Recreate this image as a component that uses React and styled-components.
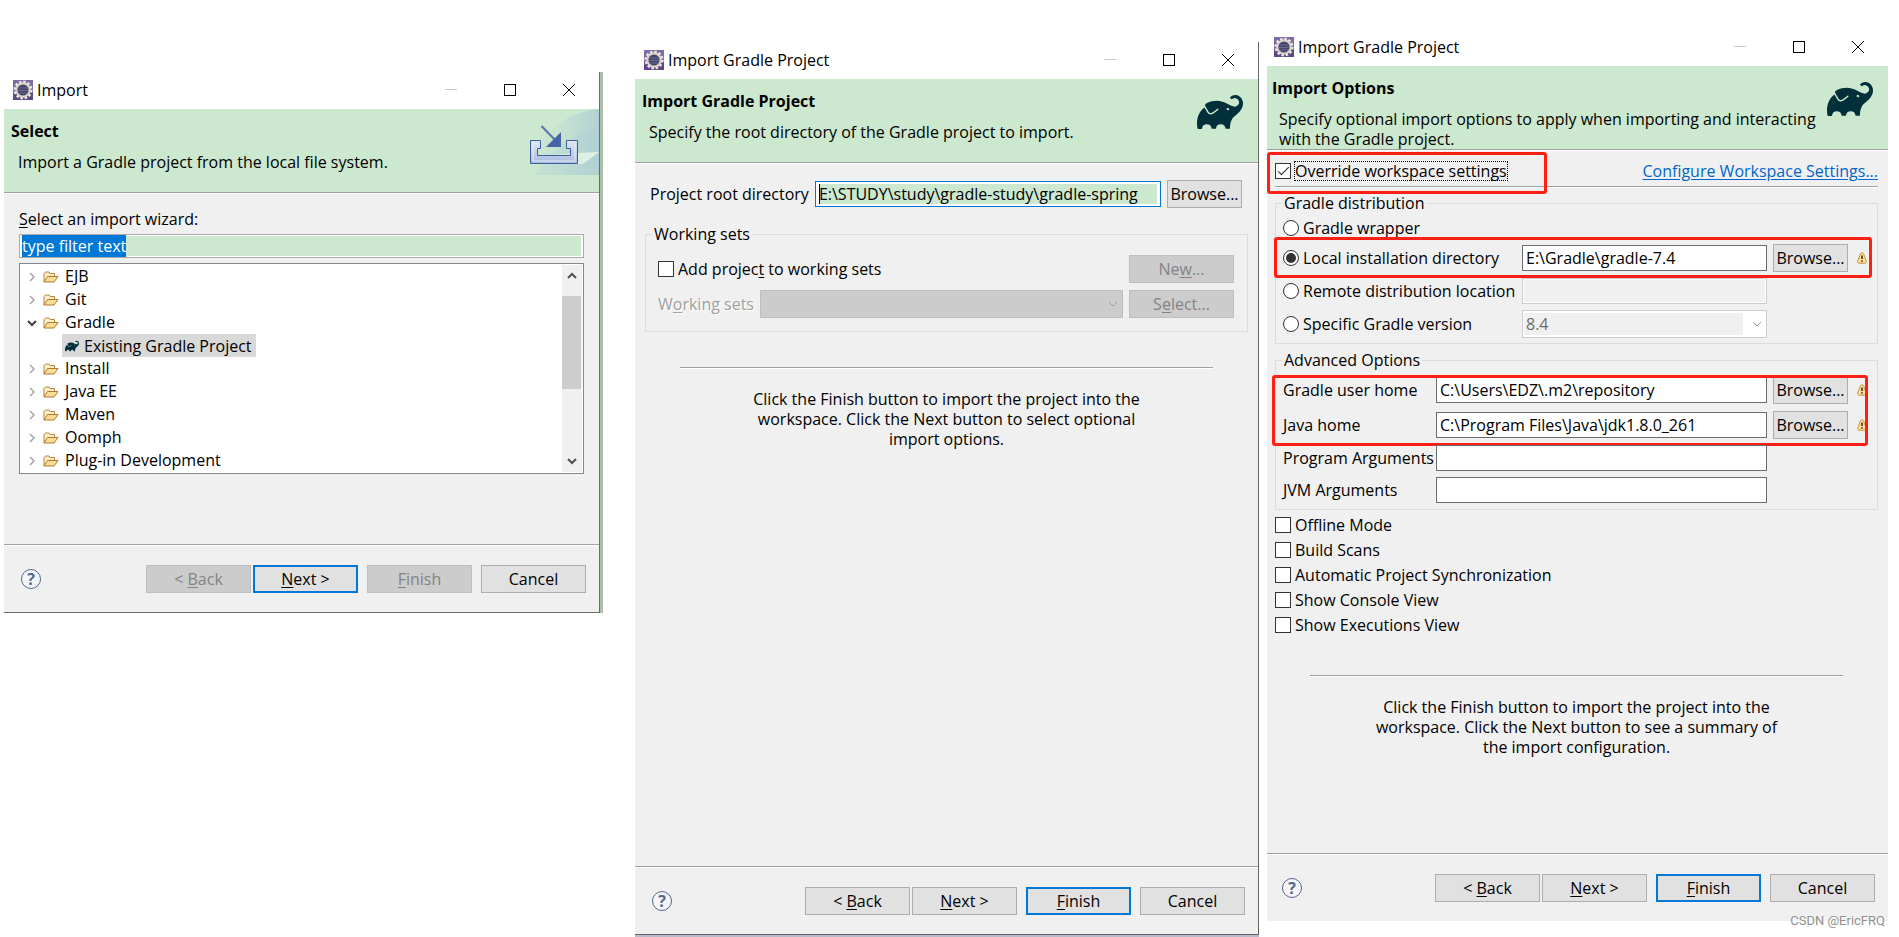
import React, { useEffect, useRef } from "react";
import styled, { createGlobalStyle, css } from "styled-components";
import { SiGradle } from "react-icons/si";

const GlobalStyle = createGlobalStyle`
  *, *::before, *::after { box-sizing: border-box; }
  body { margin: 0; background: #ffffff; }
  body, button, input, select {
    font-family: "Open Sans", "Noto Sans", "Noto Sans CJK SC", sans-serif;
    font-size: 16px;
    line-height: 20px;
    color: #000000;
  }
  u { text-underline-offset: 2px; text-decoration-thickness: 1px; }
`;

/* ---------- page and window frame ---------- */

const Desktop = styled.main`
  position: relative;
  display: grid;
  grid-template-columns: minmax(0, 596fr) 35px minmax(0, 624fr) 8px minmax(0, 621fr);
  min-height: 100vh;
  padding: 0 11px 0 4px;
`;

const Window = styled.section`
  --edge: 0px;
  display: flex;
  flex-direction: column;
  background: #f0f0f0;
`;

const SelectWindow = styled(Window)`
  grid-column: 1;
  align-self: start;
  margin-top: 72px;
  border-right: 1px solid #6a6e6b;
  border-bottom: 1px solid #6a6e6b;
  box-shadow: 3px 0 0 #a9bfac;
`;

const ProjectWindow = styled(Window)`
  grid-column: 3;
  margin: 42px 0 2px;
  border-right: 1px solid #5f6663;
  border-bottom: 1px solid #5f6663;
  box-shadow: 0 2px 0 #b7bbca;
`;

const OptionsWindow = styled(Window)`
  --edge: 2px;
  grid-column: 5;
  margin: 29px 0 16px;
`;

const TitleBar = styled.div`
  display: flex;
  align-items: center;
  height: 37px;
  padding: 0 1px 1px calc(9px - var(--edge));
  background: #ffffff;
`;

const TitleText = styled.span`
  flex: 1;
  padding-left: 4px;
  white-space: nowrap;
`;

const ControlButton = styled.button`
  display: grid;
  place-items: center;
  width: 59px;
  height: 36px;
  padding: 0;
  border: 0;
  background: none;
  color: ${(p) => (p.disabled ? "#c8c8c8" : "#000000")};
`;

const Header = styled.header`
  display: flex;
  justify-content: space-between;
  height: 85px;
  border-bottom: 1px solid #ffffff;
  box-shadow: inset 0 -1px 0 #9e9f9e;
  background: #cce8cf;
`;

const HeaderText = styled.div`
  padding: 12px 0 0 calc(7px - var(--edge));
`;

const Heading = styled.h1`
  margin: 0;
  font-size: 16px;
  line-height: 20px;
  font-weight: 700;
`;

const Description = styled.p`
  margin: 11px 0 0 7px;
  white-space: pre-line;
`;

const HeaderLogo = styled.div`
  padding: 10px 15px 0 0;
  color: #02303a;
  svg { display: block; }
`;

const Body = styled.div`
  flex: 1;
  padding: ${(p) => p.$pad};
`;

const Rule = styled.hr`
  height: 2px;
  margin: ${(p) => p.$margin};
  border: 0;
  border-top: 1px solid #a0a0a0;
  border-bottom: 1px solid #ffffff;
`;

const InfoText = styled.p`
  margin: 20px 0 0;
  text-align: center;
  white-space: pre-line;
`;

/* ---------- controls ---------- */

const Button = styled.button`
  width: ${(p) => (p.$compact ? "75px" : "105px")};
  height: 28px;
  flex: none;
  padding: 0;
  border: 1px solid #adadad;
  background: #e1e1e1;
  white-space: nowrap;
  ${(p) => p.$primary && css`border: 2px solid #0078d7;`}
  &:disabled {
    border-color: #bfbfbf;
    background: #cccccc;
    color: #838383;
  }
`;

const Field = styled.input`
  width: 100%;
  min-width: 0;
  height: 26px;
  padding: 2px 3px;
  border: 1px solid #6b6b6b;
  border-radius: 0;
  outline: 0;
  background: #ffffff;
  &:disabled {
    padding: 1px;
    border-color: #cccccc;
    background: #f0f0f0 content-box;
    box-shadow: inset 0 0 0 1px #ffffff;
  }
`;

const FilterField = styled(Field)`
  display: block;
  height: 24px;
  padding: 1px 2px;
  border-color: #ababab;
  background: linear-gradient(#cce8cf, #cce8cf) content-box, #ffffff;
  caret-color: transparent;
  &::selection { background: #0078d7; color: #ffffff; }
`;

const FocusedField = styled(Field)`
  padding: 2px 3px;
  border-color: #0078d7;
  background: linear-gradient(#000, #000) 3px 2px / 1px 20px no-repeat padding-box,
    linear-gradient(#cce8cf, #cce8cf) content-box, #ffffff;
`;

const mark = css`
  appearance: none;
  flex: none;
  display: grid;
  place-items: center;
  width: 16px;
  height: 16px;
  margin: 0;
  border: 1px solid #333333;
  background: #ffffff;
`;

const Checkbox = styled.input.attrs({ type: "checkbox" })`
  ${mark}
  &:checked::after {
    content: "";
    width: 11px;
    height: 5px;
    margin-bottom: 3px;
    border-left: 1px solid #222222;
    border-bottom: 1px solid #222222;
    transform: rotate(-45deg);
  }
`;

const Radio = styled.input.attrs({ type: "radio", name: "distribution" })`
  ${mark}
  border-radius: 50%;
  &:checked::after {
    content: "";
    width: 10px;
    height: 10px;
    border-radius: 50%;
    background: #333333;
  }
`;

const Choice = styled.label`
  display: flex;
  align-items: center;
  gap: 4px;
  white-space: nowrap;
`;

const FocusText = styled.span`
  margin-left: -1px;
  outline: 1px dotted #000000;
  outline-offset: -1px;
  padding: 0 1px;
`;

const Combo = styled.div`
  display: grid;
  align-items: center;
  min-width: 0;
  flex: 1;
  > * { grid-area: 1 / 1; }
  > svg { justify-self: end; margin-right: 5px; }
`;

const Select = styled.select`
  appearance: none;
  width: 100%;
  height: 28px;
  padding: 2px 23px 2px 1px;
  border: 1px solid ${(p) => (p.$filled ? "#bfbfbf" : "#cccccc")};
  border-radius: 0;
  background: ${(p) =>
    p.$filled ? "#cccccc" : "linear-gradient(#f0f0f0, #f0f0f0) content-box, #ffffff"};
  text-indent: 2px;
  &:disabled { color: #6d6d6d; opacity: 1; }
`;

const Group = styled.fieldset`
  min-width: 0;
  margin: ${(p) => p.$top} 0 0;
  padding: 0;
  border: 1px solid #dcdcdc;
`;

const Legend = styled.legend`
  margin-left: 6px;
  padding: 0 2px;
`;

const Stack = styled.div`
  display: flex;
  flex-direction: column;
  gap: ${(p) => p.$gap};
  padding: ${(p) => p.$pad || 0};
`;

const Row = styled.div`
  display: flex;
  align-items: center;
  justify-content: space-between;
  gap: 6px;
`;

const RowLabel = styled.label`
  white-space: nowrap;
`;

const DisabledLabel = styled(RowLabel)`
  color: #a0a0a0;
  text-shadow: 1px 1px 0 #ffffff;
`;

const OptionRow = styled.div`
  position: relative;
  display: grid;
  grid-template-columns: ${(p) => p.$label} minmax(0, 1fr) 75px 13px;
  column-gap: 6px;
  align-items: center;
  padding-right: 10px;
  > label { margin-right: -6px; }
  > svg { justify-self: end; }
`;

const Link = styled.a`
  color: #0066cc;
  text-decoration: underline;
  text-underline-offset: 2px;
  white-space: nowrap;
`;

const Relative = styled.div`
  position: relative;
`;

/* Red annotation frame drawn over the controls it points out */
const Highlight = styled.div`
  position: absolute;
  inset: ${(p) => p.$inset};
  ${(p) => p.$width && css`width: ${p.$width};`}
  border: 3px solid #ff2015;
  border-radius: 3px;
  pointer-events: none;
`;

/* ---------- wizard tree ---------- */

const Tree = styled.div`
  display: flex;
  margin-top: 5px;
  padding: 1px;
  border: 1px solid #828790;
  background: #ffffff;
`;

const TreeList = styled.ul`
  flex: 1;
  margin: 0;
  padding: 0;
  list-style: none;
`;

const TreeItem = styled.li`
  display: flex;
  align-items: center;
  height: 23px;
  padding-left: 6px;
  gap: 6px;
  line-height: 23px;
  svg { flex: none; }
`;

const TreeLeaf = styled.li`
  display: flex;
  align-items: center;
  width: max-content;
  height: 23px;
  margin-left: 41px;
  padding: 0 4px 0 3px;
  gap: 5px;
  background: #d9d9d9;
  color: #000000;
  svg { color: #02303a; }
`;

const ScrollBar = styled.div`
  display: flex;
  flex-direction: column;
  align-items: center;
  justify-content: space-between;
  width: 20px;
  padding: 6px 0;
  background: #f0f0f0;
`;

const ScrollThumb = styled.div`
  width: 19px;
  height: 93px;
  margin: 15px 1px auto 0;
  background: #cdcdcd;
`;

/* ---------- footer ---------- */

const Footer = styled.footer`
  display: flex;
  align-items: center;
  padding: 20px 13px 19px calc(17px - var(--edge));
  border-top: 1px solid #a0a0a0;
  box-shadow: inset 0 1px 0 #ffffff;
`;

const FooterButtons = styled.div`
  display: flex;
  gap: 9px;
  margin-left: auto;
`;

const Pair = styled.div`
  display: flex;
  gap: 2px;
`;

const HelpButton = styled.button`
  display: grid;
  place-items: center;
  width: 20px;
  height: 20px;
  padding: 0;
  border: 1px solid #56688a;
  border-radius: 50%;
  background: #f4f5f8;
  color: #56688a;
  font-size: 16px;
  font-weight: 700;
  line-height: 18px;
`;

const Watermark = styled.span`
  position: absolute;
  right: 14px;
  bottom: 6px;
  font-family: Roboto, "Liberation Sans", sans-serif;
  font-size: 13px;
  color: #8f8f8f;
  text-shadow: 1px 1px 0 #ffffff;
`;

/* ---------- drawings ---------- */

const EclipseIcon = () => (
  <svg width="20" height="20" viewBox="0 0 20 20" aria-hidden="true">
    <rect width="20" height="20" fill="#7d6ba4" />
    <rect y="12" width="20" height="8" fill="#5d4787" />
    <circle cx="10" cy="10" r="8.200" fill="none" stroke="#efebe2" strokeWidth="2.600" strokeDasharray="2.500 1.794" />
    <circle cx="10" cy="10" r="6.700" fill="#45456a" stroke="#d9d4cc" strokeWidth="2.200" />
    <path d="M5.500 8h9M5 10.500h10M5.500 13h9" stroke="#6d6990" strokeWidth="1" />
  </svg>
);

const FolderIcon = () => (
  <svg width="16" height="12" viewBox="0 0 16 12" aria-hidden="true">
    <path d="M1 11V2.500L2.500 1h3.500l1.200 1.500H11.500V5" fill="#fdf0c8" stroke="#b8823a" />
    <path d="M1 11L4.500 5.500H15L11 11z" fill="#fbdc94" stroke="#b07830" strokeLinejoin="round" />
  </svg>
);

const Chevron = ({ dir, color, size = 10, weight = 1 }) => {
  const d = {
    right: "M3 1l4 4-4 4",
    down: "M1 3l4 4 4-4",
    up: "M1 7l4-4 4 4",
  }[dir];
  return (
    <svg width={size} height={size} viewBox="0 0 10 10" aria-hidden="true">
      <path d={d} fill="none" stroke={color} strokeWidth={weight} />
    </svg>
  );
};

const WarningIcon = () => (
  <svg width="10" height="12" viewBox="0 0 10 12" aria-hidden="true">
    <path d="M5 .8c1.300 0 1.800 1.200 2.100 2.400L9.200 9c.4 1.300-.2 2.200-1.400 2.200H2.200C1 11.200.4 10.300.8 9l2.100-5.800C3.200 2 3.700.8 5 .8z" fill="#fbe0a0" stroke="#cf8f33" />
    <path d="M5 3.500v3.500M5 8.200v1.600" stroke="#4d3510" strokeWidth="1.600" />
  </svg>
);

const ImportBanner = () => (
  <svg width="72" height="66" viewBox="0 0 72 66" aria-hidden="true">
    <defs>
      <linearGradient id="sky" x1="0" x2="1">
        <stop offset="0" stopColor="#cce8cf" />
        <stop offset=".4" stopColor="#c8e4d1" />
        <stop offset="1" stopColor="#b2d2d3" />
      </linearGradient>
      <linearGradient id="glint" x1="0" x2="1">
        <stop offset="0" stopColor="#cce8cf" />
        <stop offset="1" stopColor="#e2f2ea" />
      </linearGradient>
      <linearGradient id="tray" x1="0" y1="0" x2="0" y2="1">
        <stop offset="0" stopColor="#dfe7f6" />
        <stop offset="1" stopColor="#a9bbdf" />
      </linearGradient>
    </defs>
    <path d="M0 66C10 30 32 4 72 0v66z" fill="url(#sky)" />
    <path d="M22 50C36 32 52 22 72 20v46H8z" fill="#acccd6" opacity=".3" />
    <path d="M50 44L72 43 56 55H6l6-8z" fill="url(#glint)" />
    <path d="M3.500 31.500h10v8h-3v7h33v-7h-4v-8h11v23h-47z" fill="url(#tray)" stroke="#3f5d9b" />
    <path d="M6 34v18h42V34" fill="none" stroke="#f1f5fc" strokeWidth="1" opacity=".8" />
    <path d="M14.500 17L29 32" stroke="#5975b2" strokeWidth="2" />
    <path d="M34 23v15H19z" fill="#4665a6" />
  </svg>
);

const GradleLogo = () => <SiGradle size={46} aria-hidden="true" />;

/* ---------- shared pieces ---------- */

const WindowTitle = ({ children }) => (
  <TitleBar>
    <EclipseIcon />
    <TitleText>{children}</TitleText>
    <ControlButton aria-label="Minimize" disabled>
      <svg width="12" height="12"><path d="M0 5.500h12" stroke="currentColor" /></svg>
    </ControlButton>
    <ControlButton aria-label="Maximize">
      <svg width="12" height="12"><rect x=".5" y=".5" width="11" height="11" fill="none" stroke="currentColor" /></svg>
    </ControlButton>
    <ControlButton aria-label="Close">
      <svg width="12" height="12"><path d="M0 0l12 12M12 0L0 12" stroke="currentColor" /></svg>
    </ControlButton>
  </TitleBar>
);

const WizardFooter = ({ primary, disabled = [] }) => {
  const state = (name) => ({ $primary: primary === name, disabled: disabled.includes(name) });
  return (
    <Footer>
      <HelpButton aria-label="Help">?</HelpButton>
      <FooterButtons>
        <Pair>
          <Button {...state("back")}>&lt; <u>B</u>ack</Button>
          <Button {...state("next")}><u>N</u>ext &gt;</Button>
        </Pair>
        <Button {...state("finish")}><u>F</u>inish</Button>
        <Button>Cancel</Button>
      </FooterButtons>
    </Footer>
  );
};

const Folder = ({ name, open }) => (
  <TreeItem>
    <Chevron dir={open ? "down" : "right"} color={open ? "#404040" : "#a6a6a6"} weight={open ? 2 : 1.5} />
    <FolderIcon />
    <span>{name}</span>
  </TreeItem>
);

/* ---------- the three wizard pages ---------- */

function SelectPage() {
  const filter = useRef(null);
  useEffect(() => {
    filter.current.focus();
    filter.current.select();
  }, []);
  return (
    <SelectWindow>
      <WindowTitle>Import</WindowTitle>
      <Header>
        <HeaderText>
          <Heading>Select</Heading>
          <Description>Import a Gradle project from the local file system.</Description>
        </HeaderText>
        <ImportBanner />
      </Header>
      <Body $pad="15px 15px 70px">
        <RowLabel htmlFor="filter"><u>S</u>elect an import wizard:</RowLabel>
        <Stack $pad="5px 0 0">
          <FilterField id="filter" ref={filter} defaultValue="type filter text" />
          <Tree>
            <TreeList>
              <Folder name="EJB" />
              <Folder name="Git" />
              <Folder name="Gradle" open />
              <TreeLeaf><SiGradle size={14} />Existing Gradle Project</TreeLeaf>
              <Folder name="Install" />
              <Folder name="Java EE" />
              <Folder name="Maven" />
              <Folder name="Oomph" />
              <Folder name="Plug-in Development" />
            </TreeList>
            <ScrollBar>
              <Chevron dir="up" color="#505050" weight={2} />
              <ScrollThumb />
              <Chevron dir="down" color="#505050" weight={2} />
            </ScrollBar>
          </Tree>
        </Stack>
      </Body>
      <WizardFooter primary="next" disabled={["back", "finish"]} />
    </SelectWindow>
  );
}

function ProjectPage() {
  return (
    <ProjectWindow>
      <WindowTitle>Import Gradle Project</WindowTitle>
      <Header>
        <HeaderText>
          <Heading>Import Gradle Project</Heading>
          <Description>Specify the root directory of the Gradle project to import.</Description>
        </HeaderText>
        <HeaderLogo><GradleLogo /></HeaderLogo>
      </Header>
      <Body $pad="16px 10px 0">
        <Stack $pad="0 6px 0 5px">
          <Row>
            <RowLabel htmlFor="root">Project root directory</RowLabel>
            <FocusedField id="root" defaultValue="E:\STUDY\study\gradle-study\gradle-spring" />
            <Button $compact>Browse...</Button>
          </Row>
        </Stack>
        <Group $top="16px">
          <Legend>Working sets</Legend>
          <Stack $gap="7px" $pad="11px 13px 13px 12px">
            <Row>
              <Choice><Checkbox /><span>Add projec<u>t</u> to working sets</span></Choice>
              <Button disabled>Ne<u>w</u>...</Button>
            </Row>
            <Row>
              <DisabledLabel htmlFor="sets">W<u>o</u>rking sets</DisabledLabel>
              <Combo>
                <Select id="sets" $filled disabled />
                <Chevron dir="down" color="#a0a0a0" />
              </Combo>
              <Button disabled>S<u>e</u>lect...</Button>
            </Row>
          </Stack>
        </Group>
        <Rule $margin="35px 35px 0" />
        <InfoText>
          {"Click the Finish button to import the project into the\nworkspace. Click the Next button to select optional\nimport options."}
        </InfoText>
      </Body>
      <WizardFooter primary="finish" />
    </ProjectWindow>
  );
}

function OptionsPage() {
  return (
    <OptionsWindow>
      <WindowTitle>Import Gradle Project</WindowTitle>
      <Header>
        <HeaderText>
          <Heading>Import Options</Heading>
          <Description>
            {"Specify optional import options to apply when importing and interacting\nwith the Gradle project."}
          </Description>
        </HeaderText>
        <HeaderLogo><GradleLogo /></HeaderLogo>
      </Header>
      <Body $pad="10px 10px 0 8px">
        <Relative>
          <Row>
            <Choice><Checkbox defaultChecked /><FocusText>Override workspace settings</FocusText></Choice>
            <Link href="#settings">Configure Workspace Settings...</Link>
          </Row>
          <Rule $margin="5px 0 0" />
          <Highlight $inset="-9px auto -6px -8px" $width="280px" />
        </Relative>
        <Group $top="5px">
          <Legend>Gradle distribution</Legend>
          <Stack $gap="6px" $pad="5px 0 5px 7px">
            <Choice><Radio />Gradle wrapper</Choice>
            <OptionRow $label="233px">
              <Choice><Radio defaultChecked />Local installation directory</Choice>
              <Field aria-label="Local installation directory" defaultValue="E:\Gradle\gradle-7.4" />
              <Button $compact>Browse...</Button>
              <WarningIcon />
              <Highlight $inset="-7px 5px -6px -9px" />
            </OptionRow>
            <OptionRow $label="233px">
              <Choice><Radio />Remote distribution location</Choice>
              <Field aria-label="Remote distribution location" disabled />
            </OptionRow>
            <OptionRow $label="233px">
              <Choice><Radio />Specific Gradle version</Choice>
              <Combo>
                <Select aria-label="Specific Gradle version" disabled>
                  <option>8.4</option>
                </Select>
                <Chevron dir="down" color="#a0a0a0" />
              </Combo>
            </OptionRow>
          </Stack>
        </Group>
        <Group $top="6px">
          <Legend>Advanced Options</Legend>
          <Stack $gap="6px" $pad="6px 0 6px 7px">
            <Relative>
              <Stack $gap="7px">
                <OptionRow $label="147px">
                  <RowLabel htmlFor="userhome">Gradle user home</RowLabel>
                  <Field id="userhome" defaultValue="C:\Users\EDZ\.m2\repository" />
                  <Button $compact>Browse...</Button>
                  <WarningIcon />
                </OptionRow>
                <OptionRow $label="147px">
                  <RowLabel htmlFor="javahome">Java home</RowLabel>
                  <Field id="javahome" defaultValue="C:\Program Files\Java\jdk1.8.0_261" />
                  <Button $compact>Browse...</Button>
                  <WarningIcon />
                </OptionRow>
              </Stack>
              <Highlight $inset="-1px 9px -7px -11px" />
            </Relative>
            <OptionRow $label="147px">
              <RowLabel htmlFor="args">Program Arguments</RowLabel>
              <Field id="args" />
            </OptionRow>
            <OptionRow $label="147px">
              <RowLabel htmlFor="jvm">JVM Arguments</RowLabel>
              <Field id="jvm" />
            </OptionRow>
          </Stack>
        </Group>
        <Stack $gap="5px" $pad="5px 0 0">
          <Choice><Checkbox />Offline Mode</Choice>
          <Choice><Checkbox />Build Scans</Choice>
          <Choice><Checkbox />Automatic Project Synchronization</Choice>
          <Choice><Checkbox />Show Console View</Choice>
          <Choice><Checkbox />Show Executions View</Choice>
        </Stack>
        <Rule $margin="40px 35px 0" />
        <InfoText>
          {"Click the Finish button to import the project into the\nworkspace. Click the Next button to see a summary of\nthe import configuration."}
        </InfoText>
      </Body>
      <WizardFooter primary="finish" />
    </OptionsWindow>
  );
}

export default function App() {
  return (
    <Desktop>
      <GlobalStyle />
      <SelectPage />
      <ProjectPage />
      <OptionsPage />
      <Watermark>CSDN @EricFRQ</Watermark>
    </Desktop>
  );
}
